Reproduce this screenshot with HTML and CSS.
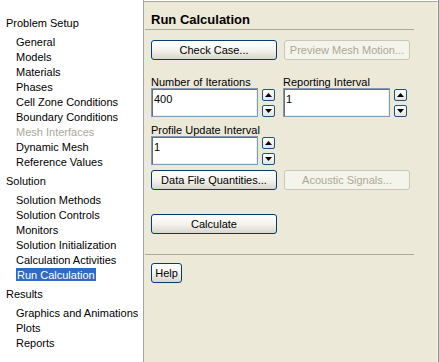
FILE: index.html
```html
<!DOCTYPE html>
<html lang="en">
<head>
  <meta charset="UTF-8">
  <meta name="viewport" content="width=device-width, initial-scale=1.0">
  <title>Run Calculation</title>
  <link rel="stylesheet" href="styles.css">
</head>
<body>
  <div class="tree">
    <div class="group">Problem Setup</div>
    <div class="item">General</div>
    <div class="item">Models</div>
    <div class="item">Materials</div>
    <div class="item">Phases</div>
    <div class="item">Cell Zone Conditions</div>
    <div class="item">Boundary Conditions</div>
    <div class="item disabled">Mesh Interfaces</div>
    <div class="item">Dynamic Mesh</div>
    <div class="item">Reference Values</div>
    <div class="group">Solution</div>
    <div class="item">Solution Methods</div>
    <div class="item">Solution Controls</div>
    <div class="item">Monitors</div>
    <div class="item">Solution Initialization</div>
    <div class="item">Calculation Activities</div>
    <div class="item"><span class="selected">Run Calculation</span></div>
    <div class="group">Results</div>
    <div class="item">Graphics and Animations</div>
    <div class="item">Plots</div>
    <div class="item">Reports</div>
  </div>

  <div class="panel">
    <div class="title">Run Calculation</div>

    <div class="row buttons-top">
      <button class="btn">Check Case...</button>
      <button class="btn" disabled>Preview Mesh Motion...</button>
    </div>

    <div class="row fields-top">
      <div class="field">
        <label>Number of Iterations</label>
        <div class="spin-field">
          <input type="text" value="400">
          <div class="spinner">
            <button class="arrow"><svg width="7" height="4" viewBox="0 0 7 4"><path d="M0 4h7L3.5 0z"/></svg></button>
            <button class="arrow"><svg width="7" height="4" viewBox="0 0 7 4"><path d="M0 0h7L3.5 4z"/></svg></button>
          </div>
        </div>
      </div>
      <div class="field">
        <label>Reporting Interval</label>
        <div class="spin-field">
          <input type="text" value="1">
          <div class="spinner">
            <button class="arrow"><svg width="7" height="4" viewBox="0 0 7 4"><path d="M0 4h7L3.5 0z"/></svg></button>
            <button class="arrow"><svg width="7" height="4" viewBox="0 0 7 4"><path d="M0 0h7L3.5 4z"/></svg></button>
          </div>
        </div>
      </div>
    </div>

    <div class="row fields-second">
      <div class="field">
        <label>Profile Update Interval</label>
        <div class="spin-field">
          <input type="text" value="1">
          <div class="spinner">
            <button class="arrow"><svg width="7" height="4" viewBox="0 0 7 4"><path d="M0 4h7L3.5 0z"/></svg></button>
            <button class="arrow"><svg width="7" height="4" viewBox="0 0 7 4"><path d="M0 0h7L3.5 4z"/></svg></button>
          </div>
        </div>
      </div>
    </div>

    <div class="row buttons-data">
      <button class="btn">Data File Quantities...</button>
      <button class="btn" disabled>Acoustic Signals...</button>
    </div>

    <div class="row buttons-calc">
      <button class="btn">Calculate</button>
    </div>

    <div class="separator"></div>

    <div class="row buttons-help">
      <button class="btn help">Help</button>
    </div>
  </div>
  <div class="edge"></div>
</body>
</html>
```

FILE: styles.css
```css
body {
  margin: 0;
  height: 362px;
  display: flex;
  background: #fff;
  font-family: "Liberation Sans", Arial, sans-serif;
  font-size: 11px;
  color: #000;
  overflow: hidden;
}

.tree {
  width: 143px;
  padding-top: 12px;
  border-right: 1px solid #a7a69c;
  background: #fff;
  flex-shrink: 0;
}

.group {
  line-height: 15px;
  padding-left: 6px;
  margin: 4px 0;
}

.item {
  line-height: 15px;
  padding-left: 16px;
  white-space: nowrap;
}

.item.disabled {
  color: #aca899;
}

.selected {
  background: #316ac5;
  color: #fff;
  padding: 1px 1px 0;
}

.panel {
  flex: 1;
  margin-top: 1px;
  border-top: 1px solid #aca899;
  border-right: 1px solid #f7f6f0;
  background: #ece9d8;
  padding-left: 7px;
}

.edge {
  width: 1px;
  background: #8e8d86;
  flex-shrink: 0;
}

.title {
  font-size: 13px;
  font-weight: bold;
  line-height: 16px;
  padding: 10px 0 1px 6px;
  margin-left: -6px;
  width: 263px;
  border-bottom: 1px solid #aca899;
}

.row {
  display: flex;
  gap: 7px;
}

.buttons-top {
  margin-top: 10px;
}

.btn {
  width: 126px;
  height: 20px;
  padding: 0;
  border: 1px solid #003c74;
  border-radius: 3px;
  background: linear-gradient(#ffffff, #f4f3ee 50%, #d9d6cc);
  font-family: inherit;
  font-size: 11px;
  color: #000;
}

.btn:disabled {
  border-color: #c9c7ba;
  background: #f5f4ea;
  color: #aca899;
}

.btn.help {
  width: 31px;
}

.fields-top {
  margin-top: 16px;
  gap: 0;
}

.fields-second {
  margin-top: 7px;
}

.field {
  width: 132px;
}

.field label {
  display: block;
  line-height: 12px;
}

.spin-field {
  display: flex;
  gap: 4px;
}

.spin-field input {
  box-sizing: border-box;
  width: 107px;
  height: 29px;
  margin: 0;
  padding: 0 0 8px 2px;
  border: 1px solid #7f9db9;
  box-shadow: inset 1px 1px 0 #716f64, inset -1px -1px 0 #f1efe2;
  background: #fff;
  font-family: inherit;
  font-size: 11px;
  color: #000;
  outline: none;
}

.spinner {
  display: flex;
  flex-direction: column;
  justify-content: space-between;
  padding: 1px 0 0;
  height: 28px;
}

.arrow {
  box-sizing: border-box;
  width: 13px;
  height: 12px;
  padding: 0;
  border: 1px solid #1c5180;
  border-radius: 2px;
  background: linear-gradient(#ffffff, #e6e4dc);
  display: flex;
  align-items: center;
  justify-content: center;
}

.arrow svg {
  display: block;
  fill: #000;
}

.buttons-data {
  margin-top: 5px;
}

.buttons-calc {
  margin-top: 24px;
}

.separator {
  margin: 20px 0 0 -6px;
  width: 269px;
  height: 1px;
  background: #aca899;
}

.buttons-help {
  margin-top: 8px;
}
```
